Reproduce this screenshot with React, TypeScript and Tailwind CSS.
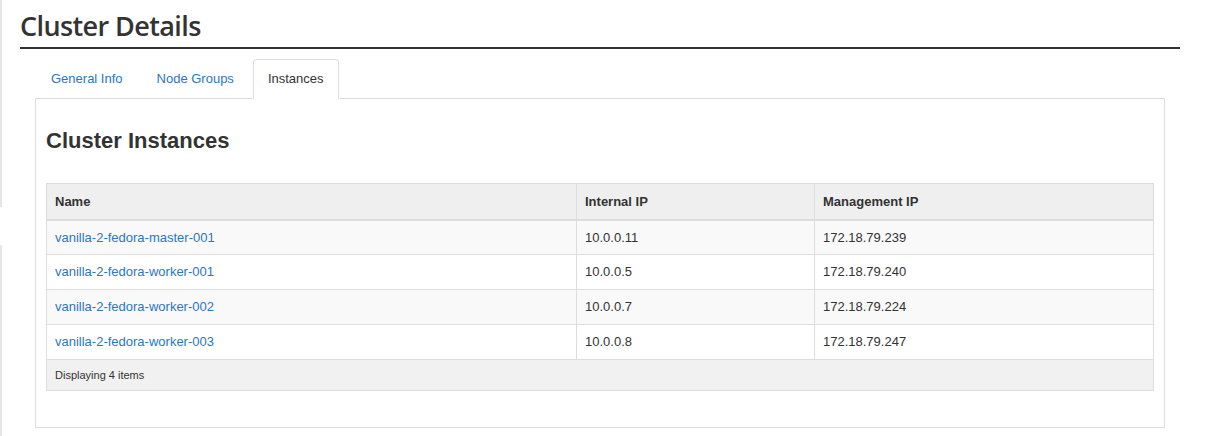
import React from 'react';

const rows = [
  { name: 'vanilla-2-fedora-master-001', internal: '10.0.0.11', mgmt: '172.18.79.239' },
  { name: 'vanilla-2-fedora-worker-001', internal: '10.0.0.5', mgmt: '172.18.79.240' },
  { name: 'vanilla-2-fedora-worker-002', internal: '10.0.0.7', mgmt: '172.18.79.224' },
  { name: 'vanilla-2-fedora-worker-003', internal: '10.0.0.8', mgmt: '172.18.79.247' },
];

export default function App() {
  return (
    <div className="relative w-[1205px] h-[436px] bg-white overflow-hidden font-['Liberation_Sans',Arial,sans-serif] text-[13px] text-[#333]">
      {/* sidebar edge */}
      <div className="absolute left-0 top-0 h-[207px] w-[2px] bg-[#e6e6e6]" />
      <div className="absolute left-0 top-[245px] h-[191px] w-[2px] bg-[#e6e6e6]" />

      <div className="pl-[20px] pr-[25px]">
        {/* Page header */}
        <div className="border-b-2 border-[#333] h-[49px] pt-[8px]">
          <h1 className="font-['Open_Sans',sans-serif] font-semibold text-[27px] leading-[36px] text-[#333] tracking-[-0.6px]">
            Cluster Details
          </h1>
        </div>

        <div className="pl-[15px] pr-[15px] pt-[10px]">
          {/* Tabs */}
          <div className="flex h-[40px] pl-px -mb-px relative z-10">
            <a className="px-[15px] leading-[40px] text-[#2a76c6]">General Info</a>
            <a className="px-[19px] leading-[40px] text-[#2a76c6]">Node Groups</a>
            <a className="px-[14px] leading-[38px] bg-white border border-[#ddd] border-b-white rounded-t-[4px] text-[#333]">
              Instances
            </a>
          </div>

          {/* Tab panel */}
          <div className="border border-[#ddd] h-[330px] px-[10px] pt-[27px]">
            <h2 className="font-bold text-[22px] leading-[30px] text-[#333]">Cluster Instances</h2>

            <table className="mt-[27px] w-full border-collapse border border-[#ddd]">
              <thead>
                <tr className="bg-[#efefef] h-[36px] border-b-2 border-[#ddd]">
                  <th className="text-left font-bold px-[8px] w-[530px] border-r border-[#ddd]">Name</th>
                  <th className="text-left font-bold px-[8px] w-[238px] border-r border-[#ddd]">Internal IP</th>
                  <th className="text-left font-bold px-[8px]">Management IP</th>
                </tr>
              </thead>
              <tbody>
                {rows.map((r, i) => (
                  <tr key={r.name} className={`h-[35px] border-b border-[#ddd] ${i % 2 === 0 ? 'bg-[#f9f9f9]' : 'bg-white'}`}>
                    <td className="px-[8px] border-r border-[#ddd]">
                      <a className="text-[#2a76c6]">{r.name}</a>
                    </td>
                    <td className="px-[8px] border-r border-[#ddd]">{r.internal}</td>
                    <td className="px-[8px]">{r.mgmt}</td>
                  </tr>
                ))}
              </tbody>
              <tfoot>
                <tr className="bg-[#f1f1f1] h-[31px]">
                  <td colSpan={3} className="px-[8px] text-[11px]">Displaying 4 items</td>
                </tr>
              </tfoot>
            </table>
          </div>
        </div>
      </div>
    </div>
  );
}
